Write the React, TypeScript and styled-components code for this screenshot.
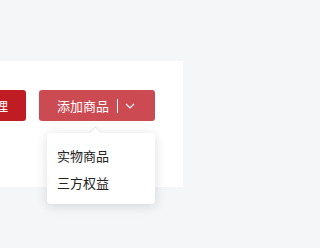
import React from 'react';
import styled, { createGlobalStyle } from 'styled-components';

const GlobalStyle = createGlobalStyle`
  html, body {
    margin: 0;
    padding: 0;
    background: #f5f6f8;
    font-family: "Noto Sans CJK SC", "Noto Sans", sans-serif;
  }
`;

const Page = styled.div`
  padding-top: 61px;
  width: 258px;
  height: 248px;
  box-sizing: border-box;
`;

const Panel = styled.div`
  width: 183px;
  height: 126px;
  background: #fff;
  box-sizing: border-box;
  padding: 29px 28px 0 0;
`;

const Toolbar = styled.div`
  display: flex;
  justify-content: flex-end;
  align-items: flex-start;
  gap: 13px;
`;

const Button = styled.button<{ $tone: 'dark' | 'light' }>`
  display: flex;
  align-items: center;
  height: 31px;
  padding: 0 ${(p) => (p.$tone === 'dark' ? '18px' : '20px')} 0 18px;
  border: none;
  border-radius: 3px;
  background: ${(p) => (p.$tone === 'dark' ? '#c01c24' : '#cc4a51')};
  color: #fff;
  font-family: inherit;
  font-size: 13px;
  white-space: nowrap;
  flex-shrink: 0;
  cursor: pointer;
`;

const SplitWrap = styled.div`
  position: relative;
`;

const Divider = styled.span`
  width: 1px;
  height: 14px;
  background: #fff;
  margin: 0 7px 0 8px;
`;

const Menu = styled.div`
  position: absolute;
  top: 43px;
  left: 8px;
  right: 0;
  background: #fff;
  border-radius: 4px;
  box-shadow: 0 2px 12px rgba(0, 0, 0, 0.14);
  padding: 9px 0 8px;

  &::before {
    content: '';
    position: absolute;
    top: -5px;
    left: 44px;
    width: 8px;
    height: 8px;
    background: #fff;
    border-left: 1px solid #e4e6ea;
    border-top: 1px solid #e4e6ea;
    transform: rotate(45deg);
  }
`;

const MenuItem = styled.div`
  height: 27px;
  line-height: 27px;
  padding: 0 10px;
  font-size: 13px;
  color: #222;
`;

export default function App() {
  return (
    <>
      <GlobalStyle />
      <Page>
        <Panel>
          <Toolbar>
            <Button $tone="dark">批量管理</Button>
            <SplitWrap>
              <Button $tone="light">
                添加商品
                <Divider />
                <svg width="10" height="6" viewBox="0 0 10 6" fill="none">
                  <path d="M1 1l4 4 4-4" stroke="#fff" strokeWidth="1.1" />
                </svg>
              </Button>
              <Menu>
                <MenuItem>实物商品</MenuItem>
                <MenuItem>三方权益</MenuItem>
              </Menu>
            </SplitWrap>
          </Toolbar>
        </Panel>
      </Page>
    </>
  );
}
